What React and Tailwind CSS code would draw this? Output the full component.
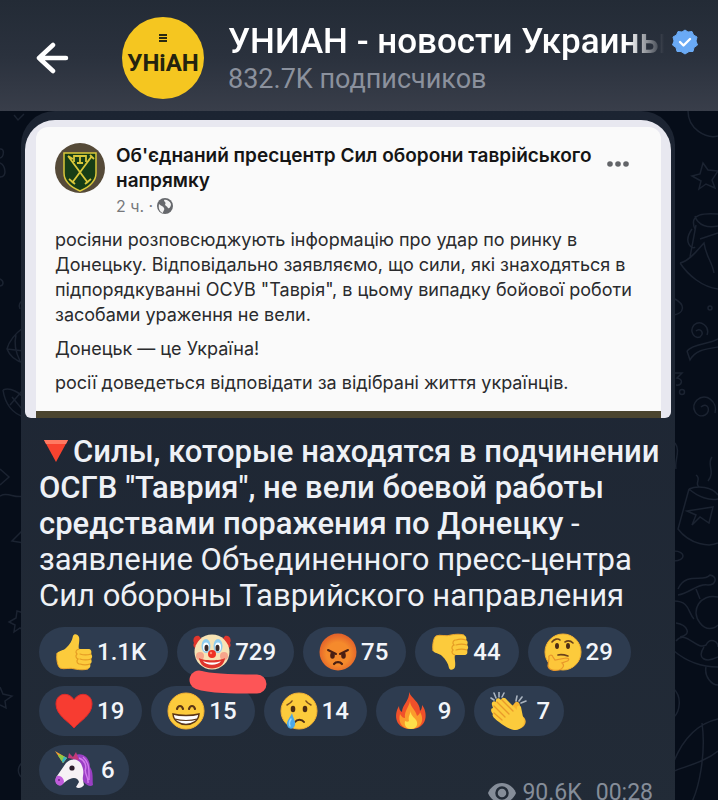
import React from 'react';

const YELLOW = '#fccb3c';

function Emoji({ children }) {
    return (
        <svg viewBox="0 0 38 38" className="w-[38px] h-[38px] shrink-0" aria-hidden="true">
            {children}
        </svg>
    );
}

function ThumbShape() {
    return (
        <>
            <path d="M2 20C1 27 3 34 5 35C9 37 15 34 20 36C25 37 29 37 33 36C35 35 36 33 35 31C37 30 37 28 36 26C38 24 37 22 36 21C37 18 36 16 33 16L24 16C23 13 25 8 24 4C23 1 19 0 18 3C17 8 15 11 11 15C8 18 5 17 2 20Z" fill={YELLOW} />
            <path d="M36 21C33 22 28 22 25 21M36 26C33 27 28 27 25 26M35 31C32 32 28 32 25 31M24 16C21 17 20 19 22 21C20 23 21 25 23 26C21 28 22 30 24 31" fill="none" stroke="#e59c24" strokeWidth="1.2" strokeLinecap="round" />
            <path d="M2 20C1 27 3 34 5 35C9 37 15 34 20 36C25 37 29 37 33 36" fill="none" stroke="#eba52c" strokeWidth="1" />
        </>
    );
}

function ThumbsUp() {
    return <Emoji><ThumbShape /></Emoji>;
}

function ThumbsDown() {
    return <Emoji><g transform="matrix(1 0 0 -1 0 38)"><ThumbShape /></g></Emoji>;
}

function Clown() {
    return (
        <Emoji>
            <path d="M6 3C2 2 -1 6 1 10C-1 13 2 17 6 16L10 8ZM32 3C36 2 39 6 37 10C39 13 36 17 32 16L28 8Z" fill="#e0352c" />
            <circle cx="19" cy="19" r="17.5" fill="#f7e3b5" />
            <circle cx="7" cy="23" r="4" fill="#f6a58b" />
            <circle cx="31" cy="23" r="4" fill="#f6a58b" />
            <ellipse cx="13" cy="13" rx="4.5" ry="7" fill="#8fcdf0" />
            <ellipse cx="25" cy="13" rx="4.5" ry="7" fill="#8fcdf0" />
            <ellipse cx="13" cy="14" rx="3" ry="4.5" fill="#fff" />
            <ellipse cx="25" cy="14" rx="3" ry="4.5" fill="#fff" />
            <ellipse cx="13.5" cy="15" rx="2" ry="3.2" fill="#3b2a2a" />
            <ellipse cx="24.5" cy="15" rx="2" ry="3.2" fill="#3b2a2a" />
            <path d="M6 25C10 28 28 28 32 25C31 39 7 39 6 25Z" fill="#e0352c" />
            <path d="M10 28C15 30 23 30 28 28C25 33 13 33 10 28Z" fill="#fff" />
            <circle cx="19" cy="21" r="4" fill="#ee3124" />
            <circle cx="18" cy="20" r="1.2" fill="#ff8a75" />
        </Emoji>
    );
}

function Angry() {
    return (
        <Emoji>
            <defs>
                <radialGradient id="angry" cx="50%" cy="55%" r="52%">
                    <stop offset="60%" stopColor="#f58a2c" />
                    <stop offset="100%" stopColor="#e4642a" />
                </radialGradient>
            </defs>
            <circle cx="19" cy="19" r="18.5" fill="url(#angry)" />
            <path d="M9 17L17 21M29 17L21 21" stroke="#4a1f12" strokeWidth="2" strokeLinecap="round" />
            <ellipse cx="13.5" cy="22.5" rx="2.3" ry="3.2" fill="#4a1f12" />
            <ellipse cx="24.5" cy="22.5" rx="2.3" ry="3.2" fill="#4a1f12" />
            <path d="M15 31C17 28.5 21 28.5 23 31" fill="none" stroke="#4a1f12" strokeWidth="2.2" strokeLinecap="round" />
        </Emoji>
    );
}

function FaceBase() {
    return <circle cx="19" cy="19" r="18" fill={YELLOW} stroke="#f3b032" strokeWidth="1" />;
}

function Thinking() {
    return (
        <Emoji>
            <FaceBase />
            <ellipse cx="13" cy="13" rx="2" ry="3" fill="#4b2c14" />
            <ellipse cx="24" cy="13" rx="2" ry="3" fill="#4b2c14" />
            <path d="M8 9C10 6 14 5 16 7M21 9C24 7 27 8 29 10M14 22C18 21 21 22 24 23" fill="none" stroke="#6b421c" strokeWidth="1.6" strokeLinecap="round" />
            <path d="M5 25C4 22 8 21 9 24L11 27L22 25C26 25 25 28 22 28.5L18 30C21 32 19 36 15 37C10 38 5 37 4 33Z" fill="#fdc63a" stroke="#e8962a" strokeWidth="1.2" />
        </Emoji>
    );
}

function Heart() {
    return (
        <Emoji>
            <path d="M19 36C13 29 1 23 1 12C1 1 14 -1 19 8C24 -1 37 1 37 12C37 23 25 29 19 36Z" fill="#f73c31" stroke="#e02a2a" strokeWidth="1" />
        </Emoji>
    );
}

function Grin() {
    return (
        <Emoji>
            <FaceBase />
            <path d="M10 17C11 13 15 13 16 17M22 17C23 13 27 13 28 17" fill="none" stroke="#5a3516" strokeWidth="2.2" strokeLinecap="round" />
            <path d="M6 22C13 24 25 24 32 22C31 36 7 36 6 22Z" fill="#fff" stroke="#5a3516" strokeWidth="1.4" />
            <path d="M8 27C14 29 24 29 30 27" fill="none" stroke="#5a3516" strokeWidth="1.2" />
        </Emoji>
    );
}

function Crying() {
    return (
        <Emoji>
            <FaceBase />
            <path d="M7 13C9 12 11 11 12 9M26 9C27 11 29 12 31 13" fill="none" stroke="#7a4d1d" strokeWidth="1.6" strokeLinecap="round" />
            <ellipse cx="13" cy="17" rx="2.3" ry="3.2" fill="#4b2c14" />
            <ellipse cx="25" cy="17" rx="2.3" ry="3.2" fill="#4b2c14" />
            <path d="M15 30C17 27 22 27 24 30" fill="none" stroke="#4b2c14" strokeWidth="2" strokeLinecap="round" />
            <path d="M12 21C13 26 16 29 15 33C14 38 7 38 7 32C7 28 10 26 12 21Z" fill="#4ba8e8" />
            <path d="M11 27C9 30 9 32 10 34" fill="none" stroke="#9ad6f8" strokeWidth="1.5" strokeLinecap="round" />
        </Emoji>
    );
}

function Fire() {
    return (
        <Emoji>
            <path d="M17 0C19 6 28 10 28 19C30 17 30 15 30 13C36 20 36 37 19 37C4 37 1 24 7 14C7 17 8 19 10 20C10 13 18 8 17 0Z" fill="#f0502a" />
            <path d="M18 9C18 15 24 18 25 24C27 23 28 21 28 20C33 28 29 37 19 37C9 37 6 29 8 22C10 25 11 26 13 26C12 19 17 15 18 9Z" fill="#fb9a2c" />
            <path d="M19 19C18 24 24 26 25 30C26 34 23 37 19 37C14 37 12 33 13 29C15 30 16 30 17 29C16 25 18 22 19 19Z" fill="#fedf4a" />
        </Emoji>
    );
}

function Clap() {
    return (
        <Emoji>
            <path d="M4 1L6 6M9 0L9 5M14 1L12 5M1 6L4 8M27 4L26 9M32 5L29 9M36 9L31 11" stroke="#a9b3bf" strokeWidth="1.6" strokeLinecap="round" />
            <path d="M24 12C26 8 30 10 30 14L31 23C36 26 37 30 34 34C30 38 26 38 22 34L14 22Z" fill="#f7b52f" />
            <path d="M2 13C1 10 4 8 6 10C5 6 9 5 11 8C12 5 15 5 17 8L27 18C26 14 29 12 31 15L33 25C36 31 32 37 26 38C20 38 14 34 9 30C6 28 1 24 3 22C0 19 1 16 3 16Z" fill={YELLOW} />
            <path d="M4 14L15 25M7 10L19 22M12 8L23 19M4 21L12 28" fill="none" stroke="#e99a2a" strokeWidth="1.3" strokeLinecap="round" />
        </Emoji>
    );
}

function Unicorn() {
    return (
        <Emoji>
            <path d="M20 4C29 1 35 8 35 16C39 22 37 28 38 34C34 37 27 32 26 24L18 9Z" fill="#9a3fc4" />
            <path d="M24 7C30 9 32 15 30 20M28 6C35 12 34 20 34 29M31 16C28 22 34 26 33 32" fill="none" stroke="#d07bec" strokeWidth="1.4" />
            <path d="M13 7L14 2L18 6L21 1L24 9Z" fill="#c23a78" />
            <path d="M11 12C17 6 25 8 27 15C30 22 27 25 28 29L29 34C27 37 23 38 21 36L24 31C23 27 19 26 15 28C10 30 8 34 4 34C0 33 0 28 2 25Z" fill="#f6f1f5" />
            <path d="M2 25C5 24 9 27 9 31C8 34 5 36 3 34C-1 32 0 27 2 25Z" fill="#c05bdc" />
            <path d="M0 0L12 7L8 12Z" fill="#f0a030" />
            <path d="M5 3.500L12 7L8 12L3 4.500Z" fill="#8ecb46" />
            <path d="M9 5.500L12 7L8 12L7 10Z" fill="#38b3c8" />
            <circle cx="17" cy="17" r="2.6" fill="#2c1d2b" />
            <circle cx="4" cy="29" r="1" fill="#6b2585" />
        </Emoji>
    );
}

const reactions = [
    { name: 'thumbs up', icon: ThumbsUp, count: '1.1K' },
    { name: 'clown', icon: Clown, count: '729', marked: true },
    { name: 'angry', icon: Angry, count: '75' },
    { name: 'thumbs down', icon: ThumbsDown, count: '44' },
    { name: 'thinking', icon: Thinking, count: '29' },
    { name: 'heart', icon: Heart, count: '19' },
    { name: 'grin', icon: Grin, count: '15' },
    { name: 'crying', icon: Crying, count: '14' },
    { name: 'fire', icon: Fire, count: '9' },
    { name: 'clap', icon: Clap, count: '7' },
    { name: 'unicorn', icon: Unicorn, count: '6' },
];

// the count sits a little differently depending on how many characters it has
const spacing = {
    1: 'gap-2 pr-3.5',
    2: 'gap-1 pr-[18px]',
    3: 'gap-1 pr-[18px]',
    4: 'gap-1 pr-[22px]',
};

function Reaction({ name, icon: Icon, count, marked }) {
    return (
        <button
            type="button"
            aria-label={`${name} ${count}`}
            className={`relative flex items-center h-[50px] rounded-full bg-[#2e3c50] pl-4 text-2xl font-medium text-[#f2f5fa] ${spacing[count.length]}`}
        >
            <Icon />
            <span>{count}</span>
            {marked && (
                <svg viewBox="0 0 78 24" className="absolute left-3 top-[43px] w-[78px] h-6 z-10" aria-hidden="true">
                    <path d="M10 10C22 14 44 14 68 14" fill="none" stroke="#fd5557" strokeWidth="19" strokeLinecap="round" />
                </svg>
            )}
        </button>
    );
}

function Header() {
    return (
        <header className="flex items-center h-[111px] shrink-0 pt-1 pl-[35px] pr-5 bg-linear-to-b from-[#232b36] via-[#2a313d] to-[#393e4a]">
            <button type="button" aria-label="Back" className="shrink-0">
                <svg viewBox="0 0 34 32" className="w-[34px] h-8" fill="none" stroke="#fff" strokeWidth="4.5" strokeLinecap="round" strokeLinejoin="round">
                    <path d="M31 16H4M18 3L4 16L18 29" />
                </svg>
            </button>
            <div className="w-[82px] h-[82px] ml-[53px] rounded-full bg-[#f5c620] shrink-0">
                <svg viewBox="0 0 82 82" className="w-full h-full">
                    <path d="M37 18H45M37 21H45M37 24H45" stroke="#2b2a12" strokeWidth="2" />
                    <text x="41" y="54" textAnchor="middle" fill="#24240f" fontSize="24" fontWeight="700" fontFamily="'Liberation Sans Narrow', Roboto, sans-serif">УНіАН</text>
                </svg>
            </div>
            <div className="flex-1 min-w-0 ml-6">
                <div className="flex items-center gap-2">
                    <h1 className="flex-1 min-w-0 overflow-hidden whitespace-nowrap text-[35px] leading-[42px] font-medium text-white [mask-image:linear-gradient(to_right,black_calc(100%-36px),transparent)]">
                        УНИАН - новости Украины
                    </h1>
                    <svg viewBox="0 0 26 26" className="w-[26px] h-[26px] shrink-0" role="img" aria-label="Verified">
                        <path d="M13 1L16 3L20 2.500L21.500 6L25 8L24 12L25.500 16L22 18.500L21 22.500L17 22.500L13 25L9 22.500L5 22.500L4 18.500L0.500 16L2 12L1 8L4.500 6L6 2.500L10 3Z" fill="#6aaaf5" stroke="#6aaaf5" strokeWidth="1" strokeLinejoin="round" />
                        <path d="M8 13L11.500 16.500L18 10" fill="none" stroke="#fff" strokeWidth="2.4" strokeLinecap="round" strokeLinejoin="round" />
                    </svg>
                </div>
                <p className="text-[27px] leading-8 text-[#8b919d]">832.7K подписчиков</p>
            </div>
        </header>
    );
}

function Wallpaper() {
    return (
        <div className="absolute inset-0 flex justify-between overflow-hidden" aria-hidden="true">
            <svg viewBox="0 0 220 700" className="w-[220px] h-[700px]" fill="none" stroke="#1b2331" strokeWidth="1.5">
                <path d="M14 4L18 9L24 3M78 10L84 3M114 9C118 1 128 1 132 9M195 9L199 3M208 9C212 3 220 3 220 9" />
                <path d="M0 38C5 37 4 46 0 47M0 52C5 54 8 66 0 66M0 168C4 170 4 174 0 175" />
                <path d="M24 216C16 222 9 230 7 238C10 246 16 250 24 252M7 238L24 240M16 224C14 232 16 242 20 250M24 190C20 190 18 194 20 198" />
                <path d="M3 279C10 276 20 281 26 290M3 279C5 293 12 302 24 306M10 294L22 280M12 286L22 298" />
                <path d="M0 358L9 366L0 374M0 385C8 380 14 388 24 385M24 418L12 430L24 432" />
                <path d="M24 502L17 500L16 507L9 511L15 514L14 521L20 517L24 520M0 576L3 583L12 585L5 590L6 597L0 594M24 650C16 656 17 664 24 668" />
            </svg>
            <svg viewBox="0 0 218 700" className="w-[218px] h-[700px]" fill="none" stroke="#1b2331" strokeWidth="1.5">
                <path d="M188 0C188 18 206 28 218 25" />
                <path d="M192 65L200 63L203 52L208 59L218 60L212 69L215 77L206 73L199 78L201 70Z" />
                <path d="M195 118C188 102 206 102 218 103M195 105C198 115 208 117 218 115M192 118C182 132 193 139 195 136M180 152C190 150 198 138 204 132C206 146 212 150 214 162M180 152C188 164 202 176 218 178M196 114L190 146M200 128L218 122" />
                <path d="M175 188C186 194 184 202 174 204M196 220C200 216 205 222 200 226C194 228 189 220 194 214C201 208 210 216 207 224M187 240C194 232 208 234 218 228M187 240L190 249C196 238 208 238 218 236" />
                <circle cx="210" cy="197" r="2" />
                <path d="M174 262L182 262L177 267C184 268 182 275 176 274" />
                <circle cx="182" cy="281" r="2.5" />
                <path d="M201 296C207 290 212 300 205 304C196 308 190 296 197 289C206 281 218 291 215 302" />
                <path d="M175 332C181 340 174 350 176 358M212 346C206 354 216 360 208 370M196 364C202 368 194 372 199 376" />
                <path d="M189 378L178 418C190 434 210 436 218 432M189 378C198 374 212 376 218 384M189 378C198 386 210 390 218 388M187 400L213 396L209 412L200 406L192 414L196 404Z" />
                <path d="M174 440C186 440 186 450 174 450M178 478C186 460 204 472 210 464C218 466 216 474 208 474C198 472 190 482 178 484M196 478L200 488M218 486C200 482 190 500 200 512C206 520 214 518 218 514M174 490C190 490 188 502 194 508M176 512C188 514 192 524 180 526M176 530C186 518 196 540 206 534C210 526 218 530 218 536M174 540C186 550 200 556 218 556M204 536C196 548 206 552 218 546M206 556C204 566 212 574 218 574M174 578C182 586 180 600 174 606M174 650C184 626 200 612 218 608M202 612C206 640 200 680 188 698M174 660C190 654 206 650 218 640" />
                <path d="M10 9L26 1M90 9C100 1 120 1 130 9" />
            </svg>
        </div>
    );
}

// quoted Facebook post, shown as the message photo
function PostImage() {
    return (
        <div className="mx-1 pl-[11px] pr-2.5 pt-[7px] bg-[#e8e8f0] rounded-t-[30px] rounded-b-md overflow-hidden font-['Inter',sans-serif]">
            <div className="bg-[#fafafa] border-b-[7px] border-[#4b452f] rounded-t-xl pl-[19px] pr-5 py-4">
                <div className="flex">
                    <svg viewBox="0 0 50 50" className="w-[50px] h-[50px] shrink-0" aria-hidden="true">
                        <circle cx="25" cy="25" r="25" fill="#554a38" />
                        <path d="M9 10H41V30C41 40 32 45 25 48C18 45 9 40 9 30Z" fill="#173d16" stroke="#d9c73a" strokeWidth="1.5" />
                        <path d="M13 13L33 40M37 13L17 40M14 36L20 41M36 36L30 41M13 13L18 16M37 13L33 18M35 12L39 16" stroke="#d9c73a" strokeWidth="1.8" />
                        <path d="M19 19V13H31V19M25 13V20M22 20H28" fill="none" stroke="#d9c73a" strokeWidth="1.8" />
                    </svg>
                    <div className="flex-1 ml-[11px]">
                        <h2 className="text-[19px] leading-[25px] font-semibold text-[#151515]">
                            Об'єднаний пресцентр Сил оборони таврійського напрямку
                        </h2>
                        <p className="flex items-center gap-1 text-base leading-[26px] text-[#77787c]">
                            2 ч. ·
                            <svg viewBox="0 0 16 16" className="w-4 h-4" aria-hidden="true">
                                <circle cx="8" cy="8" r="8" fill="#66686c" />
                                <path d="M2 6C4 8 6 8 7 10C8 12 6 13 6 15C3 14 1 11 2 6ZM7 2C9 1 13 3 14 6C14 9 12 11 11 10C10 8 8 8 8 6C10 5 7 4 7 2Z" fill="#f1f1f1" />
                            </svg>
                        </p>
                    </div>
                    <button type="button" aria-label="More" className="self-start mt-[18px] ml-2 mr-3">
                        <svg viewBox="0 0 22 6" className="w-[22px] h-1.5" fill="#626468">
                            <circle cx="3" cy="3" r="2.8" />
                            <circle cx="11" cy="3" r="2.8" />
                            <circle cx="19" cy="3" r="2.8" />
                        </svg>
                    </button>
                </div>
                <div className="mt-2 space-y-[9px] text-lg leading-[25px] text-[#2a2b2d] whitespace-nowrap">
                    <p>
                        росіяни розповсюджують інформацію про удар по ринку в<br />
                        Донецьку. Відповідально заявляємо, що сили, які знаходяться в<br />
                        підпорядкуванні ОСУВ "Таврія", в цьому випадку бойової роботи<br />
                        засобами ураження не вели.
                    </p>
                    <p>Донецьк — це Україна!</p>
                    <p>росії доведеться відповідати за відібрані життя українців.</p>
                </div>
            </div>
        </div>
    );
}

export default function App() {
    return (
        <div className="flex flex-col h-screen overflow-hidden bg-[#060d19] font-['Roboto',sans-serif]">
            <Header />
            <main className="relative flex-1">
                <Wallpaper />
                <article className="relative ml-[21px] mr-[43px] pt-[9px] pb-6 rounded-t-[34px] bg-linear-to-b from-[#1c2432] to-[#222b37]">
                    <PostImage />
                    <div className="pl-[18px] pr-[22px] pt-4">
                        <p className="text-[31px] leading-9 text-[#eef1f6] whitespace-nowrap">
                            <strong className="font-medium">
                                <svg viewBox="0 0 26 22" className="inline-block align-baseline w-[26px] h-[22px] mx-1" aria-hidden="true">
                                    <path d="M1 0H25L13 22Z" fill="#f8432f" />
                                    <path d="M1 0H25L23 4H3Z" fill="#ff7a62" />
                                </svg>
                                Силы, которые находятся в подчинении<br />
                                ОСГВ "Таврия", не вели боевой работы<br />
                                средствами поражения по Донецку
                            </strong>{' '}
                            -<br />
                            заявление Объединенного пресс-центра<br />
                            Сил обороны Таврийского направления
                        </p>
                        <div className="flex flex-wrap gap-[9px] mt-[13px]">
                            {reactions.map((r) => (
                                <Reaction key={r.name} {...r} />
                            ))}
                            <div className="flex items-center self-end h-7 ml-auto -mb-3 text-[23px] text-[#858d99]">
                                <svg viewBox="0 0 28 20" className="w-7 h-5 mr-1.5" aria-hidden="true">
                                    <path d="M14 0C7 0 2 5 0 10C2 15 7 20 14 20C21 20 26 15 28 10C26 5 21 0 14 0Z" fill="#858d99" />
                                    <circle cx="14" cy="10" r="5.5" fill="none" stroke="#222b37" strokeWidth="2.5" />
                                </svg>
                                <span>90.6K</span>
                                <time className="ml-3.5">00:28</time>
                            </div>
                        </div>
                    </div>
                </article>
            </main>
        </div>
    );
}
